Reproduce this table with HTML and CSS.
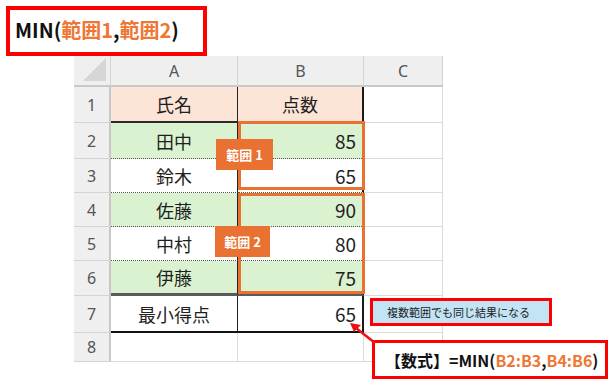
FILE: index.html
```html
<!DOCTYPE html>
<html lang="ja">
<head>
<meta charset="utf-8">
<link rel="stylesheet" href="styles.css">
</head>
<body>
<div class="page">
  <div class="title">MIN(<span class="or">範囲1</span>,<span class="or">範囲2</span>)</div>

  <div class="sheet">
    <div class="corner"><span class="tri"></span></div>
    <div class="colh">A</div>
    <div class="colh">B</div>
    <div class="colh">C</div>

    <div class="rowh">1</div>
    <div class="c a hdr">氏名</div>
    <div class="c b hdr ctr">点数</div>
    <div class="c e"></div>

    <div class="rowh">2</div>
    <div class="c a g dot">田中</div>
    <div class="c b g dot">85</div>
    <div class="c e"></div>

    <div class="rowh">3</div>
    <div class="c a dot">鈴木</div>
    <div class="c b dot">65</div>
    <div class="c e"></div>

    <div class="rowh">4</div>
    <div class="c a g dot">佐藤</div>
    <div class="c b g dot">90</div>
    <div class="c e"></div>

    <div class="rowh">5</div>
    <div class="c a dot">中村</div>
    <div class="c b dot">80</div>
    <div class="c e"></div>

    <div class="rowh">6</div>
    <div class="c a g thick">伊藤</div>
    <div class="c b g thick">75</div>
    <div class="c e"></div>

    <div class="rowh">7</div>
    <div class="c a last">最小得点</div>
    <div class="c b last">65</div>
    <div class="c e"></div>

    <div class="rowh">8</div>
    <div class="c e"></div>
    <div class="c e"></div>
    <div class="c e"></div>
  </div>

  <div class="range r1"></div>
  <div class="range r2"></div>
  <div class="tag t1">範囲 1</div>
  <div class="tag t2">範囲 2</div>

  <div class="note">複数範囲でも同じ結果になる</div>
  <div class="formula">【数式】=MIN(<span class="or">B2:B3</span>,<span class="or">B4:B6</span>)</div>

  <svg class="arrow" width="613" height="386" viewBox="0 0 613 386">
    <line x1="375" y1="343" x2="356" y2="328" stroke="#ee1111" stroke-width="2.5"/>
    <polygon points="350,323 361,325 354,332" fill="#ee1111"/>
  </svg>
</div>
</body>
</html>
```

FILE: styles.css
```css
* { box-sizing: border-box; }
html, body { margin: 0; padding: 0; background: #fff; }
body {
  font-family: "Noto Sans CJK JP", "Noto Sans", sans-serif;
  color: #1f1f1f;
}
.page {
  position: relative;
  width: 613px;
  height: 386px;
  overflow: hidden;
}
.or { color: #ee7733; }

.title {
  margin: 6px 0 0 6px;
  width: 201px;
  height: 50px;
  border: 4px solid #ff0000;
  font-weight: 700;
  font-size: 20px;
  line-height: 40px;
  padding-left: 5px;
  color: #111;
  white-space: nowrap;
}

.sheet {
  margin-left: 74px;
  display: grid;
  grid-template-columns: 37px 127px 126px 79px;
  grid-template-rows: 31px 36px 36px 34px 34px 34px 35px 37px 29px;
  font-size: 18px;
}
.corner, .colh, .rowh {
  background: #efefef;
  color: #555;
  border-right: 1px solid #d4d4d4;
  border-bottom: 1px solid #d4d4d4;
}
.corner {
  position: relative;
  border-bottom: 2px solid #c8c8c8;
}
.tri {
  position: absolute;
  right: 4px;
  bottom: 4px;
  width: 0;
  height: 0;
  border-left: 23px solid transparent;
  border-bottom: 23px solid #d6d6d6;
}
.colh {
  display: flex;
  align-items: center;
  justify-content: center;
  font-family: "Noto Sans", sans-serif;
  font-size: 16px;
  border-bottom: 2px solid #c8c8c8;
}
.rowh {
  display: flex;
  align-items: center;
  justify-content: center;
  font-family: "Noto Sans", sans-serif;
  font-size: 16px;
  border-right: 2px solid #c8c8c8;
}
.rowh:last-of-type { border-bottom: none; }

.c {
  display: flex;
  align-items: center;
  border-right: 1px solid #dadada;
  border-bottom: 1px solid #dadada;
}
.c.a {
  justify-content: center;
  border-right: 1px solid #222;
}
.c.b {
  justify-content: flex-end;
  padding-right: 6px;
  border-right: 2px solid #1a1a1a;
  font-size: 19px;
}
.c.b.ctr { justify-content: center; padding-right: 0; font-size: 18px; }
.hdr {
  background: #fce4d6;
  border-bottom: 2px solid #2a2a2a !important;
}
.g { background: #daf2d0; }
.dot { border-bottom: 1px dotted #555 !important; }
.thick { border-bottom: 3px solid #5a5a5a !important; }
.last { border-bottom: 2px solid #111 !important; }

.range {
  position: absolute;
  border: 3px solid #e97132;
}
.r1 { left: 238px; top: 121px; width: 127px; height: 69px; }
.r2 { left: 238px; top: 193px; width: 127px; height: 101px; }

.tag {
  position: absolute;
  background: #e97132;
  color: #fff;
  font-weight: 700;
  font-size: 13px;
  height: 31px;
  display: flex;
  align-items: center;
  justify-content: center;
}
.t1 { left: 216px; top: 139px; width: 57px; }
.t2 { left: 215px; top: 226px; width: 55px; }

.note {
  position: absolute;
  left: 370px;
  top: 298px;
  width: 182px;
  height: 28px;
  background: #c3e4f5;
  border: 3px solid #ff0000;
  font-size: 11px;
  padding-left: 14px;
  display: flex;
  align-items: center;
  color: #222;
  white-space: nowrap;
}
.formula {
  position: absolute;
  left: 372px;
  top: 340px;
  width: 236px;
  height: 39px;
  border: 3px solid #ff0000;
  background: #fff;
  font-weight: 700;
  font-size: 16px;
  padding-left: 10px;
  display: flex;
  align-items: center;
  color: #111;
  white-space: nowrap;
}
.arrow {
  position: absolute;
  left: 0;
  top: 0;
  pointer-events: none;
}
```
